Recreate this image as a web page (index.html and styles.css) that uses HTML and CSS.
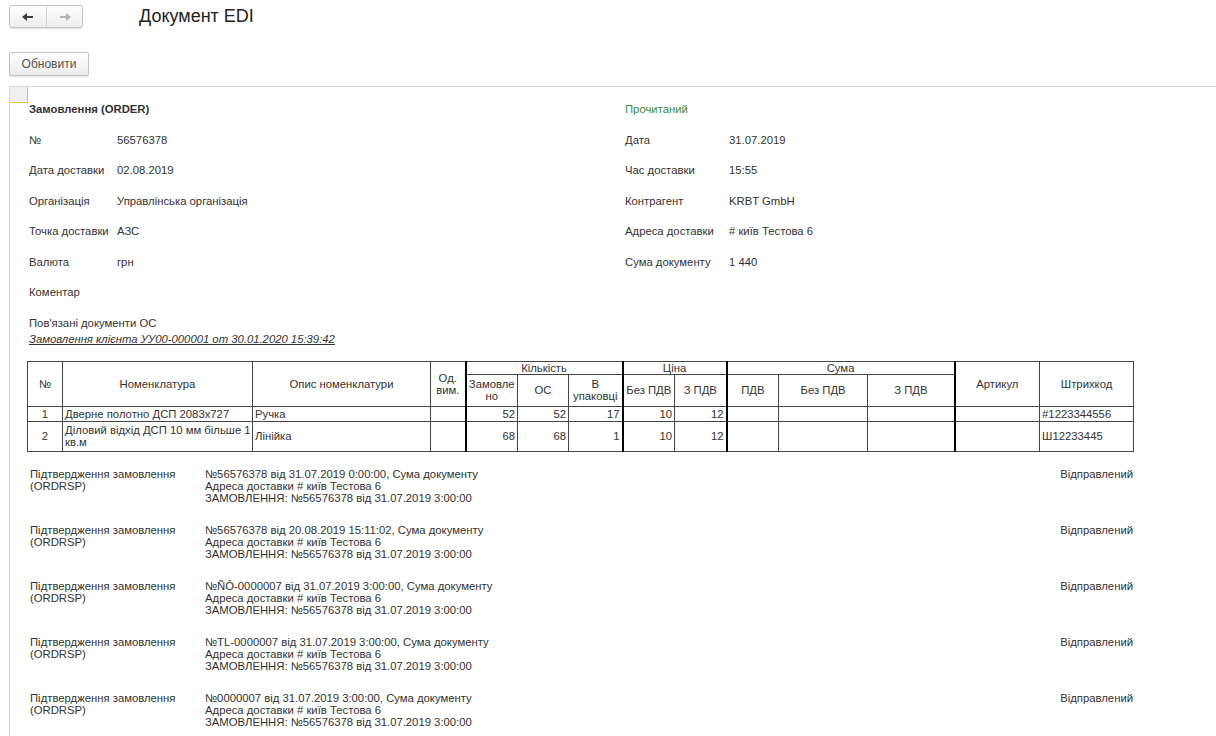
FILE: index.html
```html
<!DOCTYPE html>
<html lang="uk">
<head>
  <meta charset="UTF-8">
  <title>Документ EDI</title>
  <link rel="stylesheet" href="styles.css">
</head>
<body>
  <!-- верхня панель -->
  <div class="toolbar">
    <div class="nav">
      <button class="nav-btn">
        <svg width="12" height="10" viewBox="0 0 12 10"><path d="M0 5 L5 1 L5 4 L11 4 L11 6 L5 6 L5 9 Z" fill="#3c3c3c"/></svg>
      </button>
      <button class="nav-btn off">
        <svg width="12" height="10" viewBox="0 0 12 10"><path d="M12 5 L7 1 L7 4 L1 4 L1 6 L7 6 L7 9 Z" fill="#b4b4b4"/></svg>
      </button>
    </div>
    <h1 class="title">Документ EDI</h1>
  </div>
  <div class="actions">
    <button class="btn">Обновити</button>
  </div>

  <div class="doc">
    <div class="corner"></div>
    <div class="fields">
      <div class="col col-left">
        <div class="row"><b>Замовлення (ORDER)</b></div>
        <div class="row"><span class="label">№</span><span>56576378</span></div>
        <div class="row"><span class="label">Дата доставки</span><span>02.08.2019</span></div>
        <div class="row"><span class="label">Організація</span><span>Управлінська організація</span></div>
        <div class="row"><span class="label">Точка доставки</span><span>АЗС</span></div>
        <div class="row"><span class="label">Валюта</span><span>грн</span></div>
        <div class="row"><span class="label">Коментар</span></div>
        <div class="related">
          Пов'язані документи ОС<br>
          <a class="doc-link">Замовлення клієнта УУ00-000001 от 30.01.2020 15:39:42</a>
        </div>
      </div>
      <div class="col col-right">
        <div class="row status-read">Прочитаний</div>
        <div class="row"><span class="label">Дата</span><span>31.07.2019</span></div>
        <div class="row"><span class="label">Час доставки</span><span>15:55</span></div>
        <div class="row"><span class="label">Контрагент</span><span>KRBT GmbH</span></div>
        <div class="row"><span class="label">Адреса доставки</span><span># київ Тестова 6</span></div>
        <div class="row"><span class="label">Сума документу</span><span>1 440</span></div>
      </div>
    </div>

    <table class="goods">
      <colgroup>
        <col style="width:35px"><col style="width:190px"><col style="width:178px"><col style="width:35px">
        <col style="width:52px"><col style="width:51px"><col style="width:54px">
        <col style="width:52px"><col style="width:52px">
        <col style="width:52px"><col style="width:89px"><col style="width:87px">
        <col style="width:85px"><col style="width:94px">
      </colgroup>
      <thead>
        <tr class="h1">
          <th rowspan="2">№</th>
          <th rowspan="2">Номенклатура</th>
          <th rowspan="2">Опис номенклатури</th>
          <th rowspan="2" class="thick">Од.<br>вим.</th>
          <th colspan="3" class="thick">Кількість</th>
          <th colspan="2" class="thick">Ціна</th>
          <th colspan="3" class="thick">Сума</th>
          <th rowspan="2">Артикул</th>
          <th rowspan="2">Штрихкод</th>
        </tr>
        <tr class="h2">
          <th>Замовле<br>но</th>
          <th>ОС</th>
          <th class="thick">В<br>упаковці</th>
          <th>Без ПДВ</th>
          <th class="thick">З ПДВ</th>
          <th>ПДВ</th>
          <th>Без ПДВ</th>
          <th class="thick">З ПДВ</th>
        </tr>
      </thead>
      <tbody>
        <tr class="r1">
          <td class="c">1</td>
          <td>Дверне полотно ДСП 2083х727</td>
          <td>Ручка</td>
          <td class="thick"></td>
          <td class="n">52</td>
          <td class="n">52</td>
          <td class="n thick">17</td>
          <td class="n">10</td>
          <td class="n thick">12</td>
          <td></td>
          <td></td>
          <td class="thick"></td>
          <td></td>
          <td>#1223344556</td>
        </tr>
        <tr class="r2">
          <td class="c">2</td>
          <td class="wrap">Діловий відхід ДСП 10 мм більше 1<br>кв.м</td>
          <td>Лінійка</td>
          <td class="thick"></td>
          <td class="n">68</td>
          <td class="n">68</td>
          <td class="n thick">1</td>
          <td class="n">10</td>
          <td class="n thick">12</td>
          <td></td>
          <td></td>
          <td class="thick"></td>
          <td></td>
          <td>Ш12233445</td>
        </tr>
      </tbody>
    </table>

    <div class="replies">
      <div class="reply">
        <div>Підтвердження замовлення<br>(ORDRSP)</div>
        <div>№56576378 від 31.07.2019 0:00:00, Сума документу<br>Адреса доставки # київ Тестова 6<br>ЗАМОВЛЕННЯ: №56576378 від 31.07.2019 3:00:00</div>
        <div class="state">Відправлений</div>
      </div>
      <div class="reply">
        <div>Підтвердження замовлення<br>(ORDRSP)</div>
        <div>№56576378 від 20.08.2019 15:11:02, Сума документу<br>Адреса доставки # київ Тестова 6<br>ЗАМОВЛЕННЯ: №56576378 від 31.07.2019 3:00:00</div>
        <div class="state">Відправлений</div>
      </div>
      <div class="reply">
        <div>Підтвердження замовлення<br>(ORDRSP)</div>
        <div>№ÑÔ-0000007 від 31.07.2019 3:00:00, Сума документу<br>Адреса доставки # київ Тестова 6<br>ЗАМОВЛЕННЯ: №56576378 від 31.07.2019 3:00:00</div>
        <div class="state">Відправлений</div>
      </div>
      <div class="reply">
        <div>Підтвердження замовлення<br>(ORDRSP)</div>
        <div>№TL-0000007 від 31.07.2019 3:00:00, Сума документу<br>Адреса доставки # київ Тестова 6<br>ЗАМОВЛЕННЯ: №56576378 від 31.07.2019 3:00:00</div>
        <div class="state">Відправлений</div>
      </div>
      <div class="reply">
        <div>Підтвердження замовлення<br>(ORDRSP)</div>
        <div>№0000007 від 31.07.2019 3:00:00, Сума документу<br>Адреса доставки # київ Тестова 6<br>ЗАМОВЛЕННЯ: №56576378 від 31.07.2019 3:00:00</div>
        <div class="state">Відправлений</div>
      </div>
    </div>
  </div>
</body>
</html>
```

FILE: styles.css
```css
/* загальне */
body {
  margin: 0;
  font-family: "Liberation Sans", Arial, sans-serif;
  font-size: 11.3px;
  color: #333;
  background: #fff;
  overflow: hidden;
}

/* верхня панель */
.toolbar {
  display: flex;
  align-items: center;
  padding: 5px 0 0 9px;
  height: 23px;
}
.nav {
  display: flex;
  height: 23px;
  border: 1px solid #c4c4c4;
  border-radius: 3px;
  box-sizing: border-box;
  background: linear-gradient(#ffffff, #ededed);
  box-shadow: 0 1px 1px rgba(0, 0, 0, 0.12);
}
.nav-btn {
  width: 36px;
  padding: 0;
  border: none;
  background: none;
  display: flex;
  align-items: center;
  justify-content: center;
}
.nav-btn + .nav-btn {
  border-left: 1px solid #d4d4d4;
}
.title {
  margin: 0 0 0 56px;
  font-size: 18px;
  font-weight: normal;
  color: #222;
}

.actions {
  padding: 24px 0 0 9px;
  height: 24px;
}
.btn {
  width: 80px;
  height: 24px;
  padding: 0;
  font-family: inherit;
  font-size: 12px;
  color: #555;
  border: 1px solid #c4c4c4;
  border-radius: 2px;
  background: linear-gradient(#ffffff, #ececec);
  box-shadow: 0 1px 1px rgba(0, 0, 0, 0.12);
}

/* документ */
.doc {
  position: relative;
  margin: 10px 0 0 9px;
  border-top: 1px solid #d6d6d6;
  border-left: 1px solid #d6d6d6;
  height: 660px;
}
.corner {
  position: absolute;
  left: 0;
  top: 0;
  width: 17px;
  height: 15px;
  background: #f0f0f0;
  border-right: 1px solid #f2c12e;
  border-bottom: 1px solid #f2c12e;
}

.fields {
  display: flex;
  padding: 7px 0 0 19px;
}
.col-left {
  width: 596px;
}
.row {
  display: flex;
  align-items: center;
  height: 30.5px;
}
.col-left .label {
  width: 88px;
}
.col-right .label {
  width: 104px;
}
.status-read {
  color: #3d8b37;
}
.related {
  padding-top: 7px;
  line-height: 16px;
}
.doc-link {
  font-style: italic;
  text-decoration: underline;
  color: #333;
}

/* таблиця товарів */
.goods {
  margin: 14px 0 0 17px;
  width: 1106px;
  table-layout: fixed;
  border-collapse: collapse;
  line-height: 12px;
}
.goods th, .goods td {
  border: 1px solid #444;
  padding: 0 2px;
  font-weight: normal;
  overflow: hidden;
  white-space: nowrap;
}
.goods th {
  text-align: center;
}
.goods .thick {
  border-right: 2px solid #000;
}
.goods .h1 th {
  height: 12px;
}
.goods .h2 th {
  height: 31px;
}
.goods .r1 td {
  height: 14px;
}
.goods .r2 td {
  height: 29px;
}
.goods .c {
  text-align: center;
}
.goods .n {
  text-align: right;
}

/* відповіді */
.replies {
  margin: 16px 0 0 17px;
  width: 1106px;
  padding-left: 3px;
  box-sizing: border-box;
}
.reply {
  display: grid;
  grid-template-columns: 175px 1fr auto;
  line-height: 12px;
  height: 36px;
  margin-bottom: 20px;
}
.state {
  text-align: right;
}
```
